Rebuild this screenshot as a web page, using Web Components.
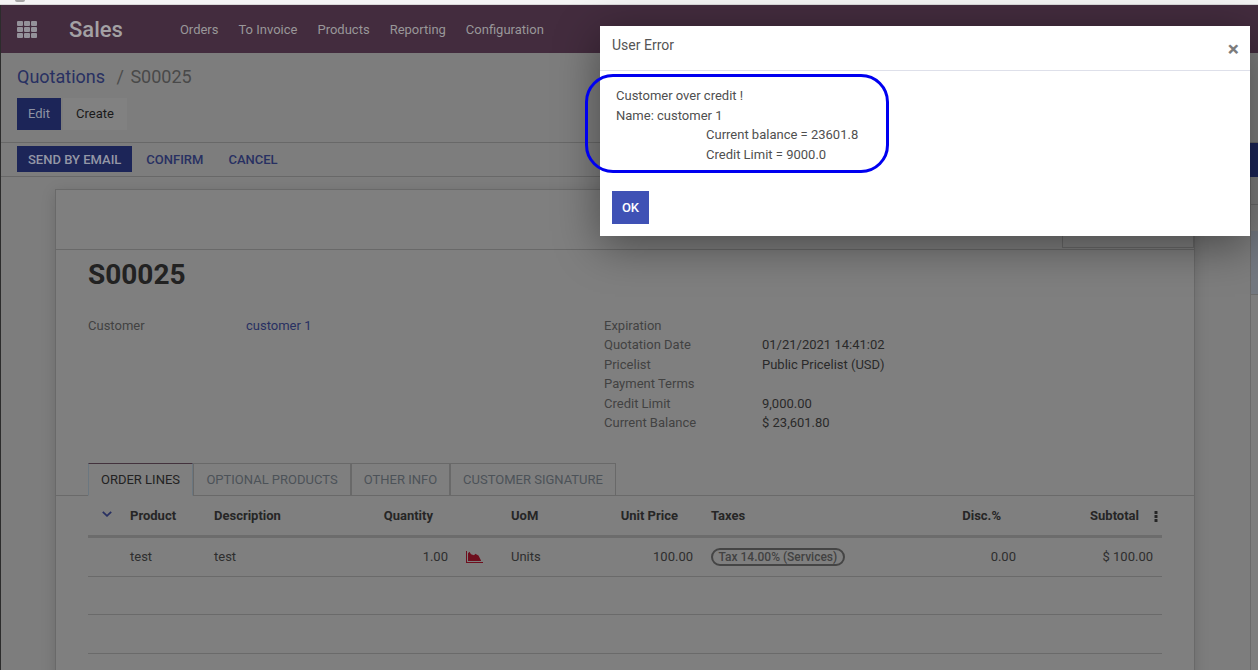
<!DOCTYPE html>
<html lang="en">
<head>
<meta charset="utf-8">
<title>Sales</title>
<style>
html,body{margin:0;padding:0;height:670px;overflow:hidden;background:#2c2c2c;font:13px/19.5px Roboto,"Liberation Sans",sans-serif}
</style>
</head>
<body>
<o-app></o-app>
<script>
function def(name, css, html){
  const t=document.createElement('template');
  t.innerHTML='<style>'+css+'</style>'+html;
  customElements.define(name,class extends HTMLElement{
    constructor(){super();this.attachShadow({mode:'open'}).appendChild(t.content.cloneNode(true));}
  });
}
def('o-navbar',`
:host{display:flex;align-items:center;height:48px;background:#432c3e;color:#a2a0a3;box-sizing:border-box;padding-left:17px}
svg{display:block;margin-right:32px}
.brand{font-size:22px;font-weight:500;color:#a3a1a4;line-height:48px;margin-right:57px;position:relative;top:1px}
nav{display:flex;gap:20px;font-size:13px;color:#999799;position:relative;top:1px}
`,`
<svg width="20" height="17" viewBox="0 0 20 17" fill="#94929a"><rect x="0" y="0" width="6" height="5" rx="1"/><rect x="7" y="0" width="6" height="5" rx="1"/><rect x="14" y="0" width="6" height="5" rx="1"/><rect x="0" y="6" width="6" height="5" rx="1"/><rect x="7" y="6" width="6" height="5" rx="1"/><rect x="14" y="6" width="6" height="5" rx="1"/><rect x="0" y="12" width="6" height="5" rx="1"/><rect x="7" y="12" width="6" height="5" rx="1"/><rect x="14" y="12" width="6" height="5" rx="1"/></svg>
<span class="brand">Sales</span>
<nav><span>Orders</span><span>To Invoice</span><span>Products</span><span>Reporting</span><span>Configuration</span></nav>
`);
def('o-control-panel',`
:host{display:block;height:90px;box-sizing:border-box;padding:10px 0 0 17px;border-bottom:1px solid #686868}
.crumb{font-size:18px;line-height:28px;margin-bottom:7px;color:#494949;white-space:pre}
.crumb b{font-weight:400;color:#283062}
.crumb i{font-style:normal;color:#4c4c4c;margin:0 2px 0 7px}
.btns{display:flex;gap:2px}
.btns span{display:flex;align-items:center;height:32px;box-sizing:border-box;padding:0 11px}
.edit{background:#1c2558;color:#8f93a3}
.btns .create{background:#818181;color:#1a1a1a;padding:0 13px}
`,`
<div class="crumb"><b>Quotations</b><i> /</i> S00025</div>
<div class="btns"><span class="edit">Edit</span><span class="create">Create</span></div>
`);
def('o-statusbar',`
:host{display:flex;height:34px;box-sizing:border-box;padding:3px 0 0 17px;border-bottom:1px solid #686868;font-weight:500;font-size:13px}
span{display:flex;align-items:center;height:26px;box-sizing:border-box;padding:1px 12px 0;color:#283062}
.primary{background:#1c2558;color:#9497a6;padding:1px 11px 0;margin-right:3px}
.c{margin-left:-1px;padding-right:13px}
`,`<span class="primary">SEND BY EMAIL</span><span class="c">CONFIRM</span><span>CANCEL</span>`);
def('o-rail',`
:host{display:flex;flex-direction:column;width:8px;flex:none;background:#7d7d7d}
.blue{height:34px;background:#1c2558;flex:none}
.a{height:27px;flex:none;border-left:1px solid #6a6a6a;border-bottom:1px solid #6a6a6a}
.b{height:26px;flex:none;border-left:1px solid #6a6a6a}
.c{height:63px;flex:none;background:#737880;border-left:1px solid #6a6a6a;border-bottom:1px solid #6a6a6a}
.d{flex:1;border-left:1px solid #6a6a6a}
`,`<div class="blue"></div><div class="a"></div><div class="b"></div><div class="c"></div><div class="d"></div>`);
def('o-field',`
:host{display:grid;grid-template-columns:158px 1fr;min-height:19.5px;line-height:19.5px}
.l{color:#424242}
.v{color:#2a2a2a}
:host([link]) .v{color:#283062}
`,`<span class="l"><slot name="label"></slot></span><span class="v"><slot></slot></span>`);
def('o-tabs',`
:host{display:flex;height:33px;box-sizing:border-box;padding-left:32px;border-bottom:1px solid #6a6a6a;font-size:13px}
span{display:flex;align-items:center;justify-content:center;height:33px;box-sizing:border-box;border:1px solid #696969;color:#4c5258}
.on{border-left:1px solid #6b7780;border-right:1px solid #6b7780;border-top:1px solid #43323d;border-bottom:1px solid #7f7f7f;color:#222}
`,`<span class="on" style="width:105px">ORDER LINES</span><span style="width:158px">OPTIONAL PRODUCTS</span><span style="width:99px">OTHER INFO</span><span style="width:166px">CUSTOMER SIGNATURE</span>`);
def('o-lines',`
:host{display:block;margin:0 32px}
.row{display:grid;grid-template-columns:30px 84px 158px 100px 39px 101px 99px 221px 108px 134px;align-items:center;color:#2e2e2e}
.head{height:39px;border-bottom:3px solid #6c6c6c;font-weight:700;color:#262626;position:relative}
.body{height:38px;border-bottom:1px solid #6a6a6a}
.e2{height:37px}
.r{text-align:right;padding-right:12px}
.head .r{padding-right:27px}
.p6{padding-right:6px}.head .p6{padding-right:21px}
.p9{padding-right:9px}.head .p9{padding-right:23px}
.pl{padding-left:12px}
.chev{display:flex;justify-content:center;padding-left:8px;padding-bottom:2px}
.kebab{position:absolute;left:1066px;top:15px}
.area{display:block;margin-left:6px}
.tag{display:inline-block;font-size:12px;line-height:14px;font-weight:500;color:#424242;border:2px solid #454545;border-radius:10px;padding:0 5.5px;white-space:nowrap}
`,`
<div class="row head">
 <span class="chev"><svg width="10" height="6" viewBox="0 0 10 6" fill="none" stroke="#283062" stroke-width="1.8"><path d="M.8.8 5 4.8 9.2.8"/></svg></span>
 <span class="pl">Product</span><span class="pl">Description</span><span class="r">Quantity</span><span></span><span class="pl">UoM</span><span class="r p6">Unit Price</span><span class="pl">Taxes</span><span class="r">Disc.%</span><span class="r p9">Subtotal</span>
 <svg class="kebab" width="4" height="11" viewBox="0 0 4 11" fill="#262626"><rect x=".5" y="0" width="3" height="3" rx=".6"/><rect x=".5" y="4" width="3" height="3" rx=".6"/><rect x=".5" y="8" width="3" height="3" rx=".6"/></svg>
</div>
<div class="row body">
 <span></span><span class="pl">test</span><span class="pl">test</span><span class="r">1.00</span>
 <span><svg class="area" width="17" height="12" viewBox="0 0 17 12"><path d="M0 0h1v11h16v1H0z" fill="#6e0f1e"/><path d="M2 10V2.200L3.500.8 5 3.300 6.500 3.800 8 4.300 9.500 2.800 11 3.800 12.500 4.500 15 9.500V10z" fill="#6e0f1e"/></svg></span>
 <span class="pl">Units</span><span class="r p6">100.00</span><span class="pl"><span class="tag">Tax 14.00% (Services)</span></span><span class="r">0.00</span><span class="r p9">$ 100.00</span>
</div>
<div class="row body e2"></div>
<div class="row body"></div>
`);
def('o-sheet',`
:host{display:block;margin:12px 55px 0;box-sizing:border-box;background:#7f7f7f;border:1px solid #696969;box-shadow:0 3px 14px rgba(0,0,0,.14);height:600px}
.top{display:flex;justify-content:flex-end;height:59px;border-bottom:1px solid #696969}
.box{width:132px;height:58px;box-sizing:border-box;border:solid #696969;border-width:0 1px 1px 1px}
h1{margin:8px 0 23.7px 32px;font-size:28px;line-height:34px;font-weight:700;color:#222}
.form{display:grid;grid-template-columns:516px 1fr;padding-left:32px;height:117px;margin-bottom:30.3px}
`,`
<div class="top"><div class="box"></div></div>
<h1>S00025</h1>
<div class="form"><div><slot name="left"></slot></div><div><slot name="right"></slot></div></div>
<o-tabs></o-tabs>
<o-lines></o-lines>
`);
def('o-dialog',`
:host{position:absolute;left:600px;top:26px;width:650px;height:210px;background:#fff;color:#4c4c4c;box-shadow:0 10px 42px rgba(0,0,0,.42);display:flex;flex-direction:column;font-size:13px;line-height:19.5px}
header{display:flex;justify-content:space-between;height:45px;flex:none;box-sizing:border-box;border-bottom:1px solid #dee0ea;padding:9px 11px 0 12px;font-size:14px;line-height:21px;color:#555}
.x{font-size:21px;font-weight:700;color:#7c7c7c;line-height:26px;margin-top:1px}
main{padding:15px 16px;height:78px;flex:none;color:#4f4f4f}
main .in{padding-left:90px}
footer{padding:12px}
button{display:block;width:37px;height:33px;border:0;background:#3f51b5;color:#fff;font:500 13px Roboto,sans-serif;padding:0}
.mark{position:absolute;left:-15px;top:48px;width:304px;height:99px;box-sizing:border-box;border:3px solid #0000f0;border-radius:28px;pointer-events:none}
`,`
<header><span>User Error</span><span class="x">×</span></header>
<main><div>Customer over credit !</div><div>Name: customer 1</div><div class="in">Current balance = 23601.8</div><div class="in">Credit Limit = 9000.0</div></main>
<footer><button>OK</button></footer>
<div class="mark"></div>
`);
def('o-app',`
:host{display:block;position:relative;width:1258px;height:670px;overflow:hidden}
.strip{height:4px;background:#f4f4f4;border-bottom:1px solid #d8d8d8;position:relative}
.strip i{position:absolute;left:15px;top:0;width:10px;height:2px;border-radius:0 0 5px 5px;background:#a6a6a6}
.page{position:relative;background:#7d7d7d;height:665px;display:flex;flex-direction:column;overflow:hidden}
.edge{position:absolute;left:0;top:0;bottom:0;width:1px;background:#2c2c2c}
.row{display:flex;flex:1;min-height:0}
.main{flex:1;min-width:0}
`,`
<div class="strip"><i></i></div>
<div class="page">
 <o-navbar></o-navbar>
 <o-control-panel></o-control-panel>
 <div class="row">
  <div class="main">
   <o-statusbar></o-statusbar>
   <o-sheet>
    <div slot="left"><o-field link><span slot="label">Customer</span>customer 1</o-field></div>
    <div slot="right">
     <o-field><span slot="label">Expiration</span></o-field>
     <o-field><span slot="label">Quotation Date</span>01/21/2021 14:41:02</o-field>
     <o-field><span slot="label">Pricelist</span>Public Pricelist (USD)</o-field>
     <o-field><span slot="label">Payment Terms</span></o-field>
     <o-field><span slot="label">Credit Limit</span>9,000.00</o-field>
     <o-field><span slot="label">Current Balance</span>$ 23,601.80</o-field>
    </div>
   </o-sheet>
  </div>
  <o-rail></o-rail>
 </div>
 <div class="edge"></div>
</div>
<o-dialog></o-dialog>
`);
</script>
</body>
</html>
